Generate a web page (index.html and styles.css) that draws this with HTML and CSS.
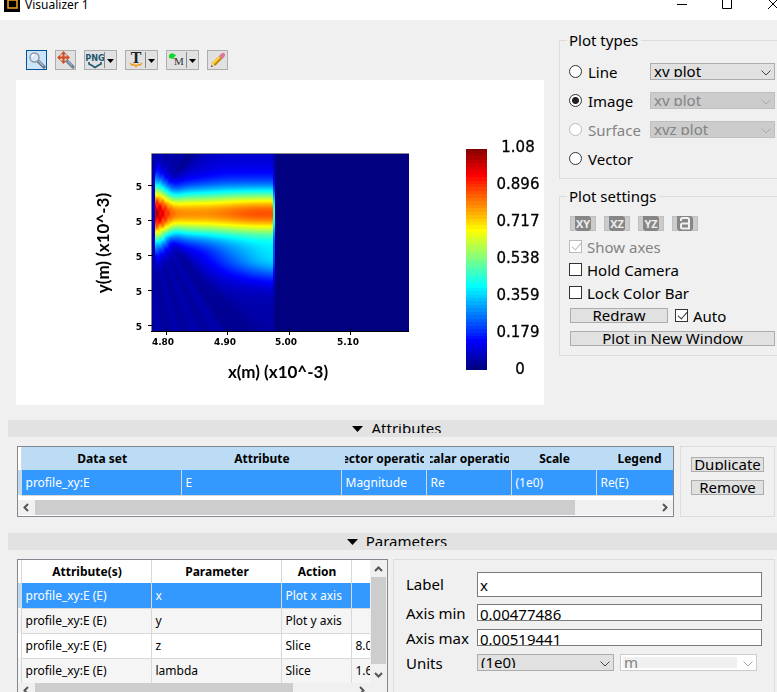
FILE: index.html
```html
<!DOCTYPE html>
<html lang="en">

<head>
    <meta charset="utf-8" />
    <title>Visualizer 1</title>
    <link rel="stylesheet" href="styles.css">
</head>

<body>
    <header class="titlebar">
        <svg class="app_icon" width="16" height="16" viewBox="0 0 16 16">
            <rect width="16" height="16" fill="#000" />
            <rect x="4" y="4" width="9" height="8" fill="none" stroke="#f5a71c" stroke-width="1.5" />
        </svg>
        <span class="title">Visualizer 1</span>
        <svg class="win_btns" width="100" height="20" viewBox="0 0 100 20" fill="none" stroke="#000">
            <path d="M0 4.5h10M45.500 -.5h9v9h-9zM91 -1l10 10M101 -1l-10 10" />
        </svg>
    </header>

    <main>
        <div class="top">
            <section class="view">
                <div class="toolbar">
                    <button class="tool active" title="Zoom">
                        <svg width="18" height="18" viewBox="0 0 18 18">
                            <path d="M10 10l6 6" stroke="#6a7482" stroke-width="3.200" stroke-linecap="round" />
                            <path d="M10.500 10l5 5" stroke="#a9b6d6" stroke-width="1.200" />
                            <circle cx="6.500" cy="6.500" r="4.500" fill="#dbe7f5" stroke="#8c97a8" stroke-width="1.400" />
                            <path d="M4 6q0-2 2.500-2.500" stroke="#fff" fill="none" stroke-width="1.500" />
                        </svg>
                    </button>
                    <button class="tool" title="Zoom extents">
                        <svg width="18" height="18" viewBox="0 0 18 18">
                            <path d="M10 10l6 6" stroke="#77808e" stroke-width="3.200" stroke-linecap="round" />
                            <path d="M11 10.500l4 4" stroke="#8fa5dc" stroke-width="1.200" />
                            <circle cx="6.500" cy="6.500" r="4.300" fill="#d8c8c4" stroke="#a08f90" />
                            <path d="M6.500 2v9M2 6.500h9" stroke="#d84a20" stroke-width="2" />
                            <path d="M6.500 0l2.500 3h-5zM6.500 13l2.500-3h-5zM0 6.500l3-2.500v5zM13 6.500l-3-2.500v5z" fill="#d84a20" />
                        </svg>
                    </button>
                    <button class="tool split" title="Export image">
                        <svg width="18" height="18" viewBox="0 0 18 18">
                            <text class="png" x="9" y="10" text-anchor="middle">PNG</text>
                            <path d="M3 11v2l3 1.500 3 2 3-2 3-1.500v-2" fill="none" stroke="#1d5670" stroke-width="1.600" />
                        </svg>
                        <svg class="arrow" width="12" height="18" viewBox="0 0 12 18"><path d="M.500 1v16" stroke="#888" /><path d="M3 8h7l-3.500 4z" /></svg>
                    </button>
                    <button class="tool split" title="Export text">
                        <svg width="18" height="18" viewBox="0 0 18 18">
                            <text class="serif_t" x="9" y="12" text-anchor="middle">T</text>
                            <path d="M3 12l2 2 2-.500 2 2 2-2 2 .500 2-2" fill="none" stroke="#eea02c" stroke-width="1.600" />
                        </svg>
                        <svg class="arrow" width="12" height="18" viewBox="0 0 12 18"><path d="M.500 1v16" stroke="#888" /><path d="M3 8h7l-3.500 4z" /></svg>
                    </button>
                    <button class="tool split" title="Markers">
                        <svg width="18" height="18" viewBox="0 0 18 18">
                            <path d="M1 4l3-2 4 2-3 4-4-1z" fill="#0bd82c" />
                            <path d="M5 7l3 3" stroke="#777" stroke-dasharray="1 1" />
                            <text class="serif_m" x="11" y="14" text-anchor="middle">M</text>
                        </svg>
                        <svg class="arrow" width="12" height="18" viewBox="0 0 12 18"><path d="M.500 1v16" stroke="#888" /><path d="M3 8h7l-3.500 4z" /></svg>
                    </button>
                    <button class="tool" title="Edit">
                        <svg width="18" height="18" viewBox="0 0 18 18">
                            <path d="M4.500 13.500L13 5" stroke="#c28a10" stroke-width="4.400" />
                            <path d="M4 12.500l8-8" stroke="#ffd83a" stroke-width="2.200" />
                            <path d="M12.500 5.500l1.500-1.500" stroke="#d8799a" stroke-width="4.400" stroke-linecap="round" />
                            <path d="M2.500 11.500l3.500 3.500-4 1z" fill="#f0d6a0" />
                            <path d="M2.500 14l1.500 1.500-2 .500z" fill="#333" />
                        </svg>
                    </button>
                </div>

                <div class="plot">
                    <canvas id="field" width="528" height="325"></canvas>
                    <svg class="axes" width="528" height="325" viewBox="0 0 528 325">
                        <path d="M135.500 252V73.500H393" fill="none" stroke="#888" />
                        <path d="M135 251.500H393M132 105.500h5M132 140.500h5M132 175.500h5M132 210.500h5M132 245.500h5M150.500 249v6M211.500 249v6M273.500 249v6M334.500 249v6" stroke="#000" />
                        <g class="tick" text-anchor="middle">
                            <text x="123" y="110">5</text>
                            <text x="123" y="145">5</text>
                            <text x="123" y="180">5</text>
                            <text x="123" y="215">5</text>
                            <text x="123" y="250">5</text>
                            <text x="147" y="265">4.80</text>
                            <text x="209" y="265">4.90</text>
                            <text x="270" y="265">5.00</text>
                            <text x="332" y="265">5.10</text>
                        </g>
                        <g class="axis_name" text-anchor="middle">
                            <text x="262" y="298">x(m) (x10^-3)</text>
                            <text transform="translate(93 163) rotate(-90)">y(m) (x10^-3)</text>
                        </g>
                        <g class="scale" text-anchor="middle">
                            <text x="502" y="72">1.08</text>
                            <text x="502" y="109">0.896</text>
                            <text x="502" y="146">0.717</text>
                            <text x="502" y="183">0.538</text>
                            <text x="502" y="220">0.359</text>
                            <text x="502" y="257">0.179</text>
                            <text x="504" y="294">0</text>
                        </g>
                    </svg>
                </div>
            </section>

            <aside class="side">
                <fieldset class="group types">
                    <legend>Plot types</legend>
                    <label><input type="radio" name="ptype">Line</label>
                    <span class="combo">
                        <select aria-label="Line plot"><option>xy plot</option></select>
                        <svg width="12" height="8" viewBox="0 0 12 8"><path d="M1.500 1.500L6 6l4.500-4.500" /></svg>
                    </span>
                    <label><input type="radio" name="ptype" checked>Image</label>
                    <span class="combo">
                        <select aria-label="Image plot" disabled><option>xy plot</option></select>
                        <svg width="12" height="8" viewBox="0 0 12 8"><path d="M1.500 1.500L6 6l4.500-4.500" /></svg>
                    </span>
                    <label class="off"><input type="radio" name="ptype" disabled>Surface</label>
                    <span class="combo">
                        <select aria-label="Surface plot" disabled><option>xyz plot</option></select>
                        <svg width="12" height="8" viewBox="0 0 12 8"><path d="M1.500 1.500L6 6l4.500-4.500" /></svg>
                    </span>
                    <label><input type="radio" name="ptype">Vector</label>
                </fieldset>

                <fieldset class="group settings">
                    <legend>Plot settings</legend>
                    <div class="planes">
                        <button class="plane" disabled><svg width="24" height="15" viewBox="0 0 24 15"><path d="M7 0h11l2 2v11l-2 2H6l-2-2V0z" /><text x="12" y="12">XY</text></svg></button>
                        <button class="plane" disabled><svg width="24" height="15" viewBox="0 0 24 15"><path d="M7 0h11l2 2v11l-2 2H6l-2-2V0z" /><text x="12" y="12">XZ</text></svg></button>
                        <button class="plane" disabled><svg width="24" height="15" viewBox="0 0 24 15"><path d="M7 0h11l2 2v11l-2 2H6l-2-2V0z" /><text x="12" y="12">YZ</text></svg></button>
                        <button class="plane" disabled aria-label="Reset view"><svg width="24" height="15" viewBox="0 0 24 15"><path d="M7 0h11l2 2v11l-2 2H6l-2-2V0z" /><path class="lock" d="M8 5V3.500q0-1.500 1.500-1.500h5q1.500 0 1.500 1.500V12.500H9.500q-1.500 0-1.500-1.500V9q0-1.500 1.500-1.500H16" /></svg></button>
                    </div>
                    <label class="off"><input type="checkbox" checked disabled>Show axes</label>
                    <label><input type="checkbox">Hold Camera</label>
                    <label><input type="checkbox">Lock Color Bar</label>
                    <div class="redraw">
                        <button class="btn"><span>Redraw</span></button>
                        <label><input type="checkbox" checked>Auto</label>
                    </div>
                    <button class="btn"><span>Plot in New Window</span></button>
                </fieldset>
            </aside>
        </div>

        <h2 class="bar"><svg width="11" height="7" viewBox="0 0 11 7"><path d="M0 0h11L5.500 6z" /></svg><span>Attributes</span></h2>
        <div class="attributes">
            <div class="grid_box">
                <div class="clip">
                    <table class="data all_sel">
                        <colgroup><col class="c4"><col class="c160"><col class="c160"><col class="c85"><col class="c85"><col class="c85"><col class="c85"></colgroup>
                        <thead>
                            <tr><td class="mark"></td><th><div>Data set</div></th><th><div>Attribute</div></th><th><div>Vector operation</div></th><th><div>Scalar operation</div></th><th><div>Scale</div></th><th><div>Legend</div></th></tr>
                        </thead>
                        <tbody>
                            <tr class="sel"><td class="mark"></td><td>profile_xy:E</td><td>E</td><td>Magnitude</td><td>Re</td><td>(1e0)</td><td>Re(E)</td></tr>
                        </tbody>
                    </table>
                </div>
                <div class="hscroll">
                    <svg width="17" height="15" viewBox="0 0 17 15"><path d="M10 4L6.500 7.500 10 11" /></svg>
                    <div class="track"><div class="thumb wide"></div></div>
                    <svg width="17" height="15" viewBox="0 0 17 15"><path d="M7 4l3.500 3.500L7 11" /></svg>
                </div>
            </div>
            <div class="panel actions">
                <button class="btn"><span>Duplicate</span></button>
                <button class="btn"><span>Remove</span></button>
            </div>
        </div>

        <h2 class="bar"><svg width="11" height="7" viewBox="0 0 11 7"><path d="M0 0h11L5.500 6z" /></svg><span>Parameters</span></h2>
        <div class="parameters">
            <div class="grid_box params_box">
                <div class="with_v">
                    <div class="clip">
                        <table class="data">
                            <colgroup><col class="c4"><col class="c130"><col class="c130"><col class="c70"><col class="c70"></colgroup>
                            <thead>
                                <tr><td class="mark"></td><th><div>Attribute(s)</div></th><th><div>Parameter</div></th><th><div>Action</div></th><th></th></tr>
                            </thead>
                            <tbody>
                                <tr class="sel"><td class="mark"></td><td>profile_xy:E (E)</td><td>x</td><td>Plot x axis</td><td></td></tr>
                                <tr><td class="mark"></td><td>profile_xy:E (E)</td><td>y</td><td>Plot y axis</td><td></td></tr>
                                <tr><td class="mark"></td><td>profile_xy:E (E)</td><td>z</td><td>Slice</td><td>8.0</td></tr>
                                <tr><td class="mark"></td><td>profile_xy:E (E)</td><td>lambda</td><td>Slice</td><td>1.6</td></tr>
                            </tbody>
                        </table>
                    </div>
                    <div class="vscroll">
                        <svg width="15" height="17" viewBox="0 0 15 17"><path d="M4 11l3.500-3.500L11 11" /></svg>
                        <div class="track"><div class="thumb"></div></div>
                        <svg width="15" height="17" viewBox="0 0 15 17"><path d="M4 7l3.500 3.500L11 7" /></svg>
                    </div>
                </div>
                <div class="hscroll">
                    <svg width="17" height="15" viewBox="0 0 17 15"><path d="M10 4L6.500 7.500 10 11" /></svg>
                    <div class="track"><div class="thumb"></div></div>
                    <svg width="17" height="15" viewBox="0 0 17 15"><path d="M7 4l3.500 3.500L7 11" /></svg>
                    <div class="corner"></div>
                </div>
            </div>
            <div class="panel form">
                <label for="label">Label</label>
                <input class="text tall" id="label" type="text" value="x">
                <label for="amin">Axis min</label>
                <input class="text" id="amin" type="text" value="0.00477486">
                <label for="amax">Axis max</label>
                <input class="text" id="amax" type="text" value="0.00519441">
                <label for="units">Units</label>
                <div class="units">
                    <span class="combo">
                        <select id="units"><option>(1e0)</option></select>
                        <svg width="12" height="8" viewBox="0 0 12 8"><path d="M1.500 1.500L6 6l4.500-4.500" /></svg>
                    </span>
                    <span class="combo editable">
                        <select aria-label="Base unit" disabled><option>m</option></select>
                        <svg width="12" height="8" viewBox="0 0 12 8"><path d="M1.500 1.500L6 6l4.500-4.500" /></svg>
                    </span>
                </div>
            </div>
        </div>
    </main>
    <script src="plot.js"></script>
</body>

</html>
```

FILE: styles.css
```css
* {
    box-sizing: border-box;
}

body {
    display: flex;
    flex-direction: column;
    margin: 0;
    height: 100vh;
    overflow: hidden;
    background: #f0f0f0;
    color: #000;
    font: 15px/20px "Noto Sans", "Open Sans", sans-serif;
}

main {
    flex: 1;
    min-height: 0;
    overflow: hidden;
}

button,
input,
select {
    font: inherit;
    color: inherit;
    margin: 0;
}

/* title bar */
.titlebar {
    display: flex;
    height: 20px;
    padding-left: 4px;
    background: #fff;
}

.app_icon {
    margin-top: -4px;
}

.title {
    flex: 1;
    margin-left: 5px;
    font-size: 12px;
    line-height: 10px;
}

/* plot area */
.top {
    display: grid;
    grid-template-columns: 1fr 218px;
    column-gap: 15px;
    padding: 10px 0 0 16px;
}

.toolbar {
    display: flex;
    gap: 8px;
    padding: 20px 0 10px 10px;
}

.tool {
    display: flex;
    justify-content: center;
    width: 21px;
    height: 20px;
    padding: 0;
    border: 1px solid #adadad;
    background: #e1e1e1;
}

.tool.split {
    width: 33px;
}

.tool.active {
    border-color: #005499;
    background: #cce4f7;
}

.png {
    font: bold 9px "DejaVu Sans Condensed", sans-serif;
    fill: #1d5670;
}

.serif_t {
    font: bold 16px "Liberation Serif", serif;
    fill: #222;
}

.serif_m {
    font: 11px "Liberation Serif", serif;
    fill: #333;
}

.plot {
    display: grid;
    height: 325px;
    background: #fff;
}

.plot canvas,
.plot svg {
    grid-area: 1 / 1;
}

.tick {
    font: bold 9px "DejaVu Sans", sans-serif;
}

.axis_name {
    font: bold 17px Lato, sans-serif;
}

.scale {
    font: 15px "DejaVu Sans", sans-serif;
    stroke: #000;
    stroke-width: .3;
}

/* right column */
.group {
    min-width: 0;
    margin: 0;
    padding: 0 2px 0 9px;
    border: 1px solid #dcdcdc;
    border-right: 0;
}

.group legend {
    margin-left: -2px;
    padding: 0 3px 0 2px;
    height: 20px;
}

.group label {
    display: flex;
    align-items: center;
}

.types {
    display: grid;
    grid-template-columns: 81px 1fr;
    grid-auto-rows: 29px;
    align-items: center;
    height: 149px;
    padding-top: 7px;
}

.settings {
    display: flex;
    flex-direction: column;
    height: 170px;
    margin-top: 7px;
}

.settings label {
    height: 23px;
}

.off {
    color: #838383;
}

input[type="radio"],
input[type="checkbox"] {
    appearance: none;
    width: 13px;
    height: 13px;
    margin-right: 5px;
    border: 1px solid #333;
    background: #fff;
}

input[type="radio"] {
    margin-right: 6px;
    border-radius: 50%;
}

input[type="radio"]:checked {
    background: radial-gradient(circle, #222 0 3px, #fff 4px);
}

input[type="checkbox"]:checked::before {
    content: "";
    display: block;
    width: 4px;
    height: 8px;
    margin-left: 4px;
    border: solid #333;
    border-width: 0 1px 1px 0;
    transform: rotate(40deg);
}

input[type="radio"]:disabled,
input[type="checkbox"]:disabled,
input[type="checkbox"]:disabled::before {
    border-color: #bbb;
}

.combo {
    display: grid;
    align-items: center;
    height: 17px;
}

.combo select,
.combo svg {
    grid-area: 1 / 1;
}

.combo select {
    appearance: none;
    width: 100%;
    height: 17px;
    padding: 2px 20px 2px 3px;
    border: 1px solid #adadad;
    border-radius: 0;
    background: #e1e1e1;
    line-height: 11px;
    opacity: 1;
}

.combo select:disabled {
    border-color: #bfbfbf;
    background: #ccc;
    color: #838383;
}

.combo svg {
    justify-self: end;
    margin: 3px 3px 0 0;
    pointer-events: none;
    fill: none;
    stroke: #444;
}

.combo select:disabled+svg {
    stroke: #aaa;
}

.combo.editable select {
    border-color: #ccc;
    background: linear-gradient(#f0f0f0, #f0f0f0) 2px 2px / calc(100% - 21px) 11px no-repeat #fff;
}

.planes {
    display: flex;
    gap: 8px;
    height: 29px;
    padding: 10px 0 4px 1px;
}

.plane {
    width: 26px;
    height: 15px;
    padding: 0;
    border: 1px solid #bfbfbf;
    background: #ccc;
    line-height: 0;
}

.plane svg {
    margin-top: -1px;
    fill: #868686;
}

.plane text {
    font: bold 11px "Open Sans", sans-serif;
    fill: #eee;
    text-anchor: middle;
}

.plane .lock {
    fill: none;
    stroke: #f2f2f2;
    stroke-width: 2;
}

.btn {
    height: 15px;
    padding: 1px 0;
    border: 1px solid #adadad;
    background: #e1e1e1;
}

.btn span {
    display: block;
    height: 10px;
    overflow: hidden;
    line-height: 9px;
}

.settings .btn {
    margin-left: 1px;
}

.settings>.btn {
    margin-top: 4px;
}

.redraw {
    display: flex;
    align-items: center;
    gap: 7px;
    height: 23px;
}

.redraw .btn {
    width: 98px;
}

/* section bars */
.bar {
    display: flex;
    align-items: center;
    justify-content: center;
    gap: 8px;
    height: 17px;
    margin: 15px 0 9px 8px;
    padding-left: 9px;
    background: #e2e2e2;
    font-size: 15px;
    font-weight: normal;
}

.bar svg {
    margin-top: 2px;
}

.bar span {
    height: 9px;
    overflow: hidden;
    line-height: 9px;
}

/* tables */
.attributes,
.parameters {
    display: flex;
    gap: 6px;
    padding: 0 2px 0 17px;
}

.parameters {
    gap: 5px;
}

.grid_box {
    flex: 1;
    min-width: 0;
    border: 1px solid #828790;
    background: #fff;
}

.params_box {
    flex: 0 0 371px;
}

.clip {
    flex: 1;
    min-width: 0;
    overflow: hidden;
}

.attributes .clip {
    height: 53px;
}

.data {
    width: 0;
    margin-left: -1px;
    border-collapse: collapse;
    table-layout: fixed;
    font-size: 12px;
    line-height: 16px;
}

.c4 {
    width: 4px;
}

.c160 {
    width: 160px;
}

.c130 {
    width: 130px;
}

.c85 {
    width: 85px;
}

.c70 {
    width: 70px;
}

.data th,
.data td {
    height: 25px;
    padding: 1px 3px 0 4px;
    border: solid #d8d8d8;
    border-width: 0 1px 1px 0;
    white-space: nowrap;
    text-align: left;
}

.data th {
    height: 23px;
    padding: 0 2px 0 4px;
    border-bottom: 0;
}

.data th div {
    display: flex;
    justify-content: center;
    overflow: hidden;
}

.data td.mark {
    padding: 0;
    border-bottom: 0;
}

.data thead .mark {
    height: 23px;
}

.all_sel th {
    border-right: 0;
    background: #bbdcf4;
}

.data tbody tr:nth-child(even) {
    background: #f5f5f5;
}

.data .sel td {
    background: #3399ff;
    color: #fff;
}

.data .sel td.mark {
    background: #bbdcf4;
}

/* scroll bars */
.hscroll,
.vscroll {
    display: flex;
    background: #f0f0f0;
}

.hscroll {
    height: 16px;
    border-bottom: 1px solid #fff;
}

.vscroll {
    flex-direction: column;
    width: 17px;
    padding: 0 1px;
}

.hscroll svg,
.vscroll svg {
    fill: none;
    stroke: #555;
    stroke-width: 2;
}

.track {
    flex: 1;
}

.thumb {
    height: 15px;
    width: 81%;
    background: #cdcdcd;
}

.thumb.wide {
    width: 87%;
}

.vscroll .thumb {
    width: 15px;
    height: 98%;
}

.with_v {
    display: flex;
    height: 123px;
}

.corner {
    width: 17px;
}

/* side panels */
.panel {
    border: 1px solid #dcdcdc;
}

.attributes + .bar {
    margin-top: 16px;
}

.actions {
    display: flex;
    flex: 0 0 95px;
    flex-direction: column;
    gap: 8px;
    padding: 10px;
}

.form {
    display: grid;
    flex: 1;
    grid-template-columns: 71px 1fr;
    grid-template-rows: 24px repeat(3, 17px);
    row-gap: 8px;
    align-items: center;
    height: 180px;
    padding: 12px;
}

.text {
    width: 100%;
    height: 17px;
    padding: 2px 2px 0;
    border: 1px solid #7a7a7a;
    background: #fff;
}

.text.tall {
    height: 25px;
}

.units {
    display: grid;
    grid-template-columns: 1fr 1fr;
    gap: 6px;
    padding-right: 5px;
}
```

FILE: plot.js
```js
const canvas = document.getElementById("field");
const ctx = canvas.getContext("2d");

// blue - cyan - yellow - red colormap
function jet(v) {
    const c = (k) => 255 * Math.min(1, Math.max(0, 1.5 - Math.abs(4 * v - k)));
    return [c(3), c(2), c(1)];
}

function gauss(d, s) {
    return Math.exp(-(d * d) / (s * s));
}

function step(a, b, t) {
    t = Math.min(1, Math.max(0, (t - a) / (b - a)));
    return t * t * (3 - 2 * t);
}

// x, y in pixels from the top left corner of the domain
function field(x, y) {
    if (x > 123) return 0;
    const d = y - 59;
    if (x < 4) return 0.03 + 0.04 * gauss(d, 40);

    const near = gauss(x - 4, 13);
    const width = 23 + 6 * near - 2 * gauss(x - 22, 9);
    const amp = 0.7 + 0.06 * step(50, 110, x) + 0.2 * near;
    let v = amp * gauss(d, width);

    // weak halo around the beam
    const out = 1 - gauss(d, 24);
    v += (d < 0 ? 0.1 : 0.06) * gauss(d, 62) * step(12, 80, x) * out;

    // lower lobe
    const edge = step(20, 125, x - Math.max(0, y - 90) * 0.4);
    v += 0.27 * edge * gauss(y - 104, y > 104 ? 22 : 30) * out;

    // dark fan from the source
    const angle = Math.atan2(d, x + 3);
    const fan = step(0.7, 1.1, Math.abs(angle)) * out;
    v += 0.035 + fan * 0.009 * Math.cos(angle * 42) - 0.025 * gauss(angle - 0.9, 0.08);
    v -= 0.03 * gauss(angle + 0.95, 0.1) * step(25, 50, -d);
    v += 0.05 * near * gauss(d, 24) * Math.cos(x * 1.1) * Math.cos(d * 0.5);

    if (x > 121) v *= 0.55;
    return Math.max(0, v);
}

const w = 258, h = 178;
const img = ctx.createImageData(w, h);
for (let y = 0; y < h; y++) {
    for (let x = 0; x < w; x++) {
        const [r, g, b] = jet(field(x, y));
        const i = (y * w + x) * 4;
        img.data.set([r, g, b, 255], i);
    }
}
ctx.putImageData(img, 135, 74);

// color bar, 64 levels
for (let y = 0; y < 221; y++) {
    const level = Math.floor((1 - y / 221) * 64) / 64;
    const [r, g, b] = jet(level);
    ctx.fillStyle = `rgb(${r}, ${g}, ${b})`;
    ctx.fillRect(450, 69 + y, 21, 1);
}
```
